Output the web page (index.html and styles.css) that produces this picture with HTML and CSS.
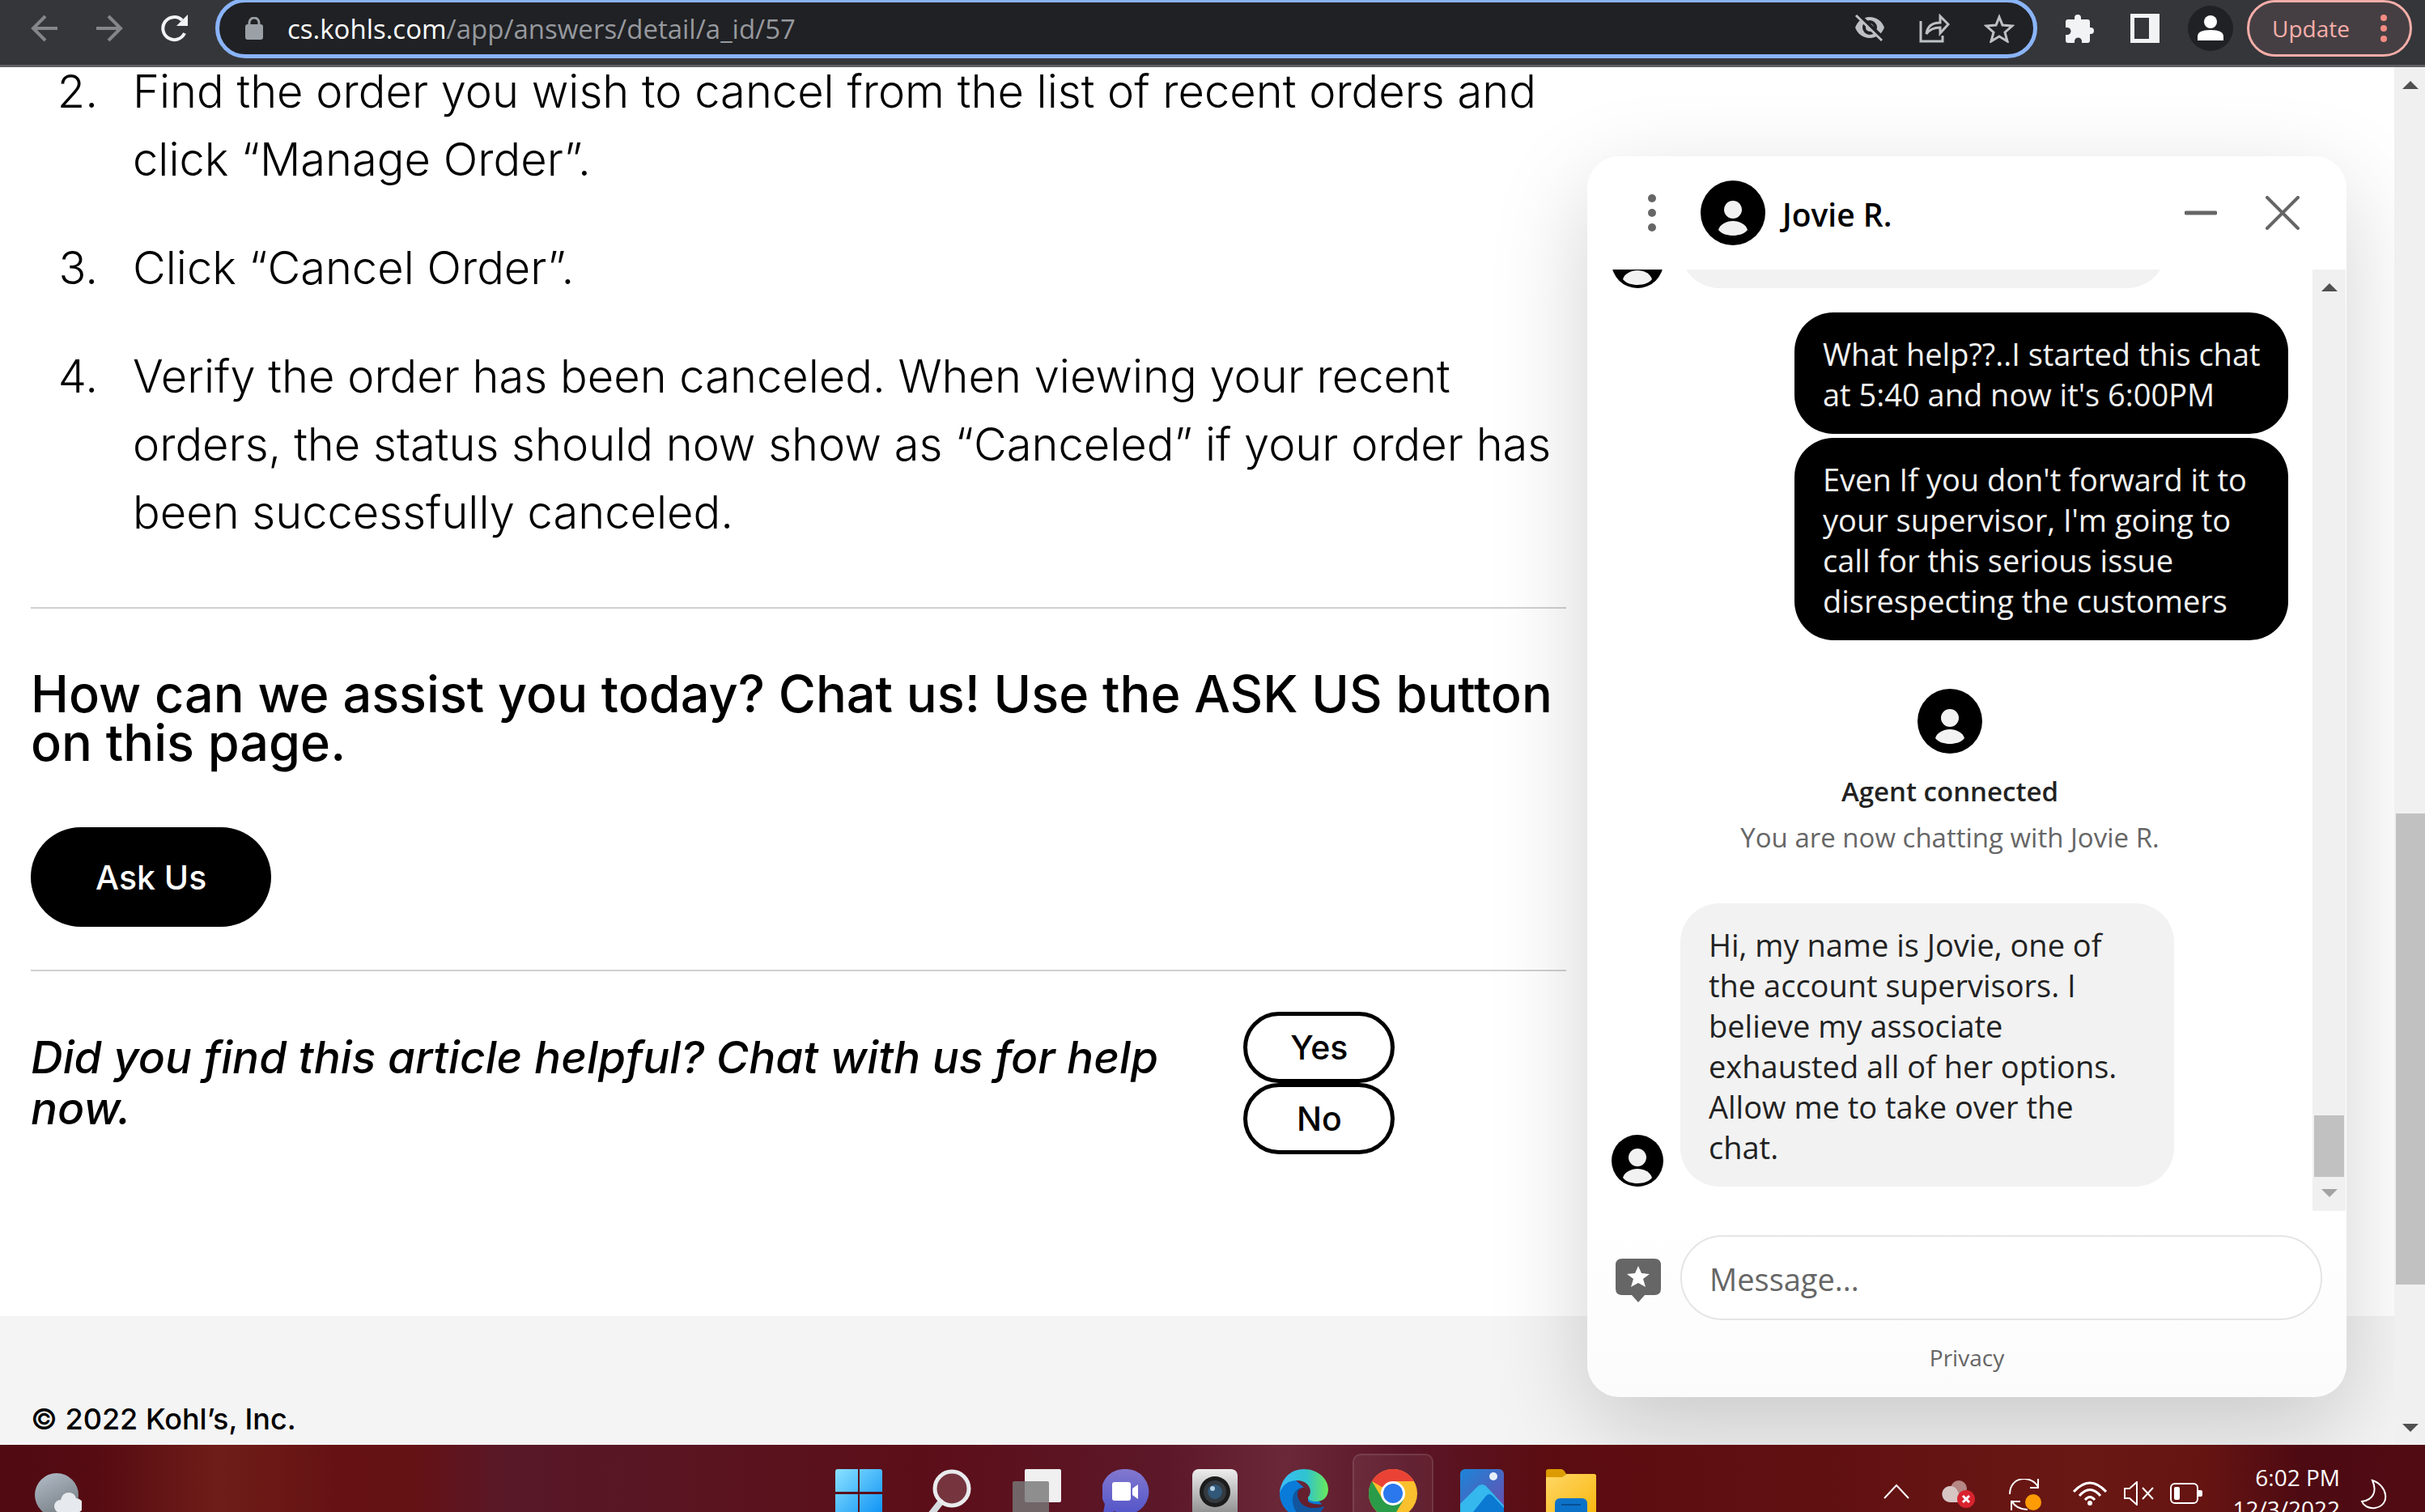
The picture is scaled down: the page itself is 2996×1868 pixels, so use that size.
FILE: index.html
```html
<!DOCTYPE html>
<html lang="en">

<head>
    <meta charset="UTF-8">
    <meta name="viewport" content="width=device-width, initial-scale=1.0">
    <title>Cancel an Order</title>
    <link rel="stylesheet" href="styles.css">
</head>

<body>
    <!-- shared person glyph -->
    <svg class="sprite" aria-hidden="true">
        <symbol id="person" viewBox="0 0 80 80">
            <circle cx="40" cy="36" r="11" />
            <path d="M22 61C24 54 32 50 40 50s16 4 18 11C54 66 47 68 40 68S26 66 22 61Z" />
        </symbol>
    </svg>

    <header class="toolbar">
        <nav class="nav-buttons">
            <button class="icon-button" aria-label="Back">
                <svg width="34" height="34" viewBox="0 0 34 34" fill="none" stroke="#84868a" stroke-width="4"><path d="M33 17H3M18 2 3 17l15 15" /></svg>
            </button>
            <button class="icon-button" aria-label="Forward">
                <svg width="34" height="34" viewBox="0 0 34 34" fill="none" stroke="#84868a" stroke-width="4"><path d="M1 17h30M16 2l15 15-15 15" /></svg>
            </button>
            <button class="icon-button" aria-label="Reload">
                <svg width="34" height="34" viewBox="0 0 34 34"><path d="M30 23A14 14 0 1 1 27 7" fill="none" stroke="#f1f3f4" stroke-width="4" /><path d="M34 0v14H20Z" fill="#f1f3f4" /></svg>
            </button>
        </nav>
        <div class="address-bar">
            <svg width="22" height="28" viewBox="0 0 22 28"><path d="M5 11V7a6 6 0 0 1 12 0v4" fill="none" stroke="#9aa0a6" stroke-width="3" /><rect y="9" width="22" height="19" rx="3" fill="#9aa0a6" /></svg>
            <a class="address" href="#"><span class="host">cs.kohls.com</span>/app/answers/detail/a_id/57</a>
            <button class="icon-button" aria-label="Third-party cookies blocked">
                <svg width="38" height="34" viewBox="0 0 38 34"><path d="M1 16C4 8 11 3 19 3s15 5 18 13c-3 8-10 13-18 13S4 24 1 16Z" fill="#bdc1c6" /><circle cx="19" cy="16" r="7" fill="none" stroke="#202124" stroke-width="4" /><path d="m5 0 32 31" stroke="#202124" stroke-width="5" /><path d="m2 1 32 31" stroke="#bdc1c6" stroke-width="3" /></svg>
            </button>
            <button class="icon-button" aria-label="Share">
                <svg width="38" height="36" viewBox="0 0 38 36" fill="none" stroke="#bdc1c6" stroke-width="3"><path d="M2 9v25h27v-7" /><path d="M9 25c1-9 7-14 17-14V3l10 10-10 11v-7c-8 0-13 2-17 8Z" /></svg>
            </button>
            <button class="icon-button" aria-label="Bookmark this page">
                <svg width="38" height="36" viewBox="0 0 38 36" fill="none" stroke="#bdc1c6" stroke-width="3"><path d="m19 4 4 10 12 1-9 8 3 11-10-6-10 6 3-11-9-8 12-1Z" /></svg>
            </button>
        </div>
        <div class="browser-actions">
            <button class="icon-button" aria-label="Extensions">
                <svg width="36" height="36" viewBox="0 0 36 36" fill="#f1f3f4"><path d="M3 7h8V5a4 4 0 0 1 8 0v2h8q3 0 3 3v7h1a4 4 0 0 1 0 8h-1v8q0 3-3 3h-7v-2a4 4 0 0 0-9 0v2H3q-3 0-3-3v-7h2a4 4 0 0 0 0-9H0v-7q0-3 3-3Z" /></svg>
            </button>
            <button class="icon-button" aria-label="Side panel">
                <svg width="36" height="36" viewBox="0 0 36 36"><path d="M0 0h36v36H0ZM5 5v26h18V5Z" fill="#f1f3f4" fill-rule="evenodd" /></svg>
            </button>
            <button class="icon-button profile" aria-label="Profile">
                <svg width="56" height="56" viewBox="0 0 56 56"><circle cx="28" cy="28" r="28" fill="#202124" /><g fill="#fff"><circle cx="28" cy="20" r="8" /><path d="M12 43v-5q0-8 16-8t16 8v5Z" /></g></svg>
            </button>
            <button class="update-button">Update
                <svg width="8" height="34" viewBox="0 0 8 34" fill="#f28b82"><circle cx="4" cy="4" r="4" /><circle cx="4" cy="17" r="4" /><circle cx="4" cy="30" r="4" /></svg>
            </button>
        </div>
    </header>

    <div class="window">
        <div class="page">
            <main class="article">
                <ol class="steps">
                    <li>Find the order you wish to cancel from the list of recent orders and click “Manage Order”.</li>
                    <li>Click “Cancel Order”.</li>
                    <li>Verify the order has been canceled. When viewing your recent orders, the status should now show as “Canceled” if your order has been successfully canceled.</li>
                </ol>
                <section class="assist">
                    <h2>How can we assist you today? Chat us! Use the ASK US button on this page.</h2>
                    <button class="ask-button">Ask Us</button>
                </section>
                <section class="feedback">
                    <p>Did you find this article helpful? Chat with us for help now.</p>
                    <div class="votes">
                        <button>Yes</button>
                        <button>No</button>
                    </div>
                </section>
            </main>
            <footer class="site-footer">© 2022 Kohl’s, Inc.</footer>

            <aside class="chat">
                <div class="chat-header">
                    <button class="icon-button" aria-label="Chat options">
                        <svg width="10" height="46" viewBox="0 0 10 46" fill="#666"><circle cx="5" cy="5" r="5" /><circle cx="5" cy="23" r="5" /><circle cx="5" cy="41" r="5" /></svg>
                    </button>
                    <svg class="avatar" viewBox="0 0 80 80"><use href="#person" /></svg>
                    <h3>Jovie R.</h3>
                    <button class="icon-button" aria-label="Minimize">
                        <svg width="40" height="40" viewBox="0 0 40 40" stroke="#666" stroke-width="5" stroke-linecap="round"><path d="M2 20h36" /></svg>
                    </button>
                    <button class="icon-button" aria-label="Close">
                        <svg width="42" height="42" viewBox="0 0 42 42" stroke="#666" stroke-width="4" stroke-linecap="round"><path d="m2 2 38 38M40 2 2 40" /></svg>
                    </button>
                </div>
                <div class="chat-body">
                    <div class="messages">
                        <div class="message previous">
                            <svg class="avatar small" viewBox="8 8 64 64"><use href="#person" width="80" height="80" /></svg>
                            <div class="bubble"></div>
                        </div>
                        <p class="bubble mine">What help??..I started this chat at 5:40 and now it's 6:00PM</p>
                        <p class="bubble mine">Even If you don't forward it to your supervisor, I'm going to call for this serious issue disrespecting the customers</p>
                        <div class="status">
                            <svg class="avatar" viewBox="0 0 80 80"><use href="#person" /></svg>
                            <h4>Agent connected</h4>
                            <p>You are now chatting with Jovie R.</p>
                        </div>
                        <div class="message">
                            <svg class="avatar small" viewBox="8 8 64 64"><use href="#person" width="80" height="80" /></svg>
                            <p class="bubble">Hi, my name is Jovie, one of the account supervisors. I believe my associate exhausted all of her options. Allow me to take over the chat.</p>
                        </div>
                    </div>
                    <div class="scrollbar chat-scrollbar">
                        <span class="arrow up"></span>
                        <span class="thumb"></span>
                        <span class="arrow down disabled"></span>
                    </div>
                </div>
                <form class="composer">
                    <button class="icon-button" type="button" aria-label="Rate this chat">
                        <svg width="56" height="54" viewBox="0 0 56 54"><path d="M8 0h40q8 0 8 8v29q0 8-8 8H36l-8 9-8-9H8q-8 0-8-8V8q0-8 8-8Z" fill="#666" /><path d="m28 9 4 9 10 1-8 6 3 10-9-5-9 5 3-10-8-6 10-1Z" fill="#fff" /></svg>
                    </button>
                    <input type="text" aria-label="Message" placeholder="Message...">
                </form>
                <a class="privacy" href="#">Privacy</a>
            </aside>
        </div>
        <div class="scrollbar">
            <span class="arrow up"></span>
            <span class="thumb"></span>
            <span class="arrow down"></span>
        </div>
    </div>

    <div class="taskbar">
        <button class="weather" aria-label="Weather">
            <svg width="58" height="60" viewBox="0 0 58 60">
                <defs><linearGradient id="moon" x2=".5" y2="1"><stop stop-color="#b4bfca" /><stop offset="1" stop-color="#798087" /></linearGradient></defs>
                <circle cx="27" cy="28" r="27" fill="url(#moon)" />
                <path d="M32 50a8 8 0 0 1 0-16q2-9 10-9 7 0 9 7a9 9 0 0 1 0 18Z" fill="#e6eaee" />
            </svg>
        </button>
        <nav class="apps">
            <button aria-label="Start">
                <svg width="58" height="62" viewBox="0 0 58 62">
                    <defs><linearGradient id="win" x2="1" y2="1"><stop stop-color="#8be2ff" /><stop offset="1" stop-color="#0a90f5" /></linearGradient></defs>
                    <path d="M3 0h25v28H0V3q0-3 3-3ZM30 0h25q3 0 3 3v25H30ZM0 31h28v28H3q-3 0-3-3ZM30 31h28v25q0 3-3 3H30Z" fill="url(#win)" />
                </svg>
            </button>
            <button aria-label="Search">
                <svg width="58" height="62" viewBox="0 0 58 62"><path d="M20 41 5 60" stroke="#d5dade" stroke-width="8" stroke-linecap="round" /><circle cx="34" cy="24" r="21" fill="#fff" fill-opacity=".16" stroke="#e9ebed" stroke-width="5" /></svg>
            </button>
            <button aria-label="Task view">
                <svg width="60" height="62" viewBox="0 0 60 62"><rect x="15" width="45" height="41" rx="2" fill="#f0f0f0" /><rect y="15" width="45" height="42" rx="2" fill="#777" fill-opacity=".82" /></svg>
            </button>
            <button aria-label="Chat">
                <svg width="58" height="62" viewBox="0 0 58 62">
                    <defs><linearGradient id="teams" x2="0" y2="1"><stop stop-color="#8278cf" /><stop offset="1" stop-color="#4f52c8" /></linearGradient></defs>
                    <path d="M28 0a28 28 0 1 1-13 52L0 60l3-17A28 28 0 0 1 28 0Z" fill="url(#teams)" />
                    <rect x="12" y="16" width="23" height="23" rx="3" fill="#fff" /><path d="m37 24 7-5v18l-7-5Z" fill="#fff" />
                </svg>
            </button>
            <button aria-label="Camera">
                <svg width="56" height="64" viewBox="0 0 56 64">
                    <defs><linearGradient id="cam" x2="0" y2="1"><stop stop-color="#eee" /><stop offset="1" stop-color="#888" /></linearGradient></defs>
                    <rect width="56" height="60" rx="8" fill="url(#cam)" /><circle cx="28" cy="28" r="19" fill="#1c1c1c" /><circle cx="28" cy="28" r="14" fill="#343a40" /><circle cx="28" cy="28" r="9" fill="#315878" /><circle cx="25" cy="24" r="3" fill="#b4d2e3" />
                </svg>
            </button>
            <button aria-label="Edge">
                <svg width="60" height="64" viewBox="0 0 60 64">
                    <defs><linearGradient id="edge" x2="1"><stop stop-color="#3dbdfb" /><stop offset=".55" stop-color="#2fc3cf" /><stop offset="1" stop-color="#6bea58" /></linearGradient></defs>
                    <path d="M0 28C2 18 10 12 20 14l18 16 17 16-9 14H30A30 30 0 0 1 0 28Z" fill="#0a7bd8" />
                    <path d="M26 23C15 26 10 44 27 61h10c9-2 15-8 18-15C44 49 24 49 23 32c0-4 1-7 3-9Z" fill="#11569f" />
                    <path d="M22 31c0-5 4-9 9-8 6 2 8 9 4 13v4c6 4 15 4 20 3v3C44 50 24 50 22 31Z" fill="#651f2d" />
                    <path d="M0 29C2 11 14 0 30 0s30 11 30 25c0 9-6 15-15 15-6 0-11-2-10-5 1-2 3-3 3-7 0-8-7-14-17-14C11 14 4 19 0 29Z" fill="url(#edge)" />
                </svg>
            </button>
            <button class="active" aria-label="Chrome">
                <svg width="60" height="64" viewBox="0 0 60 64">
                    <circle cx="30" cy="30" r="30" fill="#fbc02d" />
                    <path d="M30 30 4 15a30 30 0 0 1 52 0H30Z" fill="#ea4335" />
                    <path d="M4 15a30 30 0 0 0 26 45l13-22L30 30 17 37Z" fill="#2a9b48" />
                    <circle cx="30" cy="30" r="15" fill="#fff" /><circle cx="30" cy="30" r="12" fill="#2b78ee" />
                </svg>
            </button>
            <button aria-label="Photos">
                <svg width="54" height="60" viewBox="0 0 54 60">
                    <defs><linearGradient id="photo" x2="1" y2="1"><stop stop-color="#1a86d9" /><stop offset="1" stop-color="#704aac" /></linearGradient></defs>
                    <rect width="54" height="58" rx="6" fill="url(#photo)" /><circle cx="41" cy="9" r="5" fill="#e6f1fb" />
                    <path d="m0 43 22-22q5-4 10 0l22 24v13H0Z" fill="#34b8ee" /><path d="m12 58 20-25q4-4 8 0l14 15v10Z" fill="#0b78d1" />
                </svg>
            </button>
            <button aria-label="File Explorer">
                <svg width="62" height="60" viewBox="0 0 62 60">
                    <defs><linearGradient id="folder" x2="1" y2="1"><stop stop-color="#ffd767" /><stop offset="1" stop-color="#f8b60a" /></linearGradient></defs>
                    <path d="M3 0h16q3 0 6 6h34q3 0 3 3v20H0V3q0-3 3-3Z" fill="#dc9b03" />
                    <path d="M0 10h20l6-4h33q3 0 3 3v51H0Z" fill="url(#folder)" />
                    <path d="M11 60V43q0-7 7-7h26q7 0 7 7v17Z" fill="#0c72c9" /><path d="M19 44h24" stroke="#084f93" stroke-width="2" />
                </svg>
            </button>
        </nav>
        <div class="tray">
            <button aria-label="Show hidden icons"><svg width="32" height="34" viewBox="0 0 32 34" fill="none" stroke="#fff" stroke-width="2"><path d="m1 24 15-16 15 16" /></svg></button>
            <button aria-label="OneDrive"><svg width="42" height="36" viewBox="0 0 42 36"><circle cx="21" cy="12" r="10" fill="#b58785" /><path d="M10 29A10 10 0 1 1 19 14l7 15Z" fill="#d7c5c4" /><circle cx="30" cy="25" r="11" fill="#d9232e" /><path d="m26 21 8 8M34 21l-8 8" stroke="#fff" stroke-width="3" /></svg></button>
            <button aria-label="Windows Update"><svg width="42" height="42" viewBox="0 0 42 42" fill="none" stroke="#fff" stroke-width="2"><path d="M2 19C2-4 29-5 37 10M37 0v11H27M24 38C14 38 8 34 4 27M4 39V28h11" /><circle cx="31" cy="29" r="10" fill="#ff9b05" stroke="none" /></svg></button>
            <button class="network" aria-label="Network, sound and battery">
                <svg width="42" height="30" viewBox="0 0 42 30" fill="none" stroke="#fff" stroke-width="3"><path d="M1 13q20-22 40 0M8 18q13-15 26 0M15 23q6-7 12 0" /><circle cx="21" cy="27" r="3" fill="#fff" stroke="none" /></svg>
                <svg width="38" height="30" viewBox="0 0 38 30" fill="none" stroke="#fff" stroke-width="2"><path d="M2 9h6l9-8v28l-9-8H2ZM24 8l13 14M37 8 24 22" /></svg>
                <svg width="40" height="28" viewBox="0 0 40 28"><rect x="1" y="2" width="33" height="24" rx="5" fill="none" stroke="#fff" stroke-width="2" /><rect x="5" y="6" width="7" height="16" rx="2" fill="#fff" /><path d="M35 10h3q2 0 2 2v4q0 2-2 2h-3Z" fill="#fff" /></svg>
            </button>
            <button class="clock"><span>6:02 PM</span><span>12/3/2022</span></button>
            <button aria-label="Focus assist"><svg width="34" height="38" viewBox="0 0 34 38" fill="none" stroke="#fff" stroke-width="2"><path d="M15 2c19 6 23 31 3 34-8 1-14-3-16-8 14-2 19-12 13-26Z" /></svg></button>
        </div>
    </div>
</body>

</html>
```
FILE: styles.css
```css
* {
    box-sizing: border-box;
}

body {
    margin: 0;
    height: 100vh;
    display: flex;
    flex-direction: column;
    overflow: hidden;
    background-color: #fff;
    color: #000;
    font-family: Inter, sans-serif;
}

h2, h3, h4, p, ol {
    margin: 0;
    padding: 0;
}

button {
    border: none;
    padding: 0;
    background: none;
    color: inherit;
    font-family: inherit;
    cursor: pointer;
}

svg {
    display: block;
    flex-shrink: 0;
}

.sprite {
    position: absolute;
    width: 0;
    height: 0;
}

/* browser toolbar */
.toolbar {
    flex: none;
    display: flex;
    height: 83px;
    padding: 0 16px 0 38px;
    background-color: #35363a;
    border-bottom: 3px solid #5f5f64;
    font-family: "Open Sans", sans-serif;
}

.nav-buttons {
    display: flex;
    align-items: center;
    gap: 46px;
    height: 70px;
    margin-right: 34px;
}

.address-bar {
    flex: 1;
    display: flex;
    align-items: center;
    gap: 42px;
    height: 74px;
    margin-top: -2px;
    padding: 0 23px 0 32px;
    border: 5px solid #8ab4f8;
    border-radius: 37px;
    background-color: #202124;
}

.address {
    flex: 1;
    margin-left: -12px;
    color: #96999e;
    font-size: 33px;
    text-decoration: none;
}

.host {
    color: #fff;
}

.browser-actions {
    display: flex;
    align-items: center;
    gap: 44px;
    height: 70px;
    margin-left: 35px;
}

.profile {
    margin: 0 -27px 0 -9px;
}

.update-button {
    display: flex;
    align-items: center;
    justify-content: space-between;
    width: 204px;
    height: 70px;
    padding: 0 28px;
    border: 3px solid #f6aea9;
    border-radius: 35px;
    background-color: #453f43;
    color: #f6aea9;
    font-size: 28px;
}

/* page */
.window {
    flex: 1;
    display: flex;
    min-height: 0;
}

.page {
    flex: 1;
    position: relative;
    display: flex;
    flex-direction: column;
    overflow: hidden;
}

.article {
    flex: 1;
    width: 66%;
    padding: 0 17px 0 38px;
}

.steps {
    display: grid;
    gap: 50px;
    margin-top: -12px;
    padding-bottom: 75px;
    list-style: none;
    counter-reset: step 1;
    font-size: 56px;
    font-weight: 300;
    line-height: 84px;
}

.steps li {
    display: grid;
    grid-template-columns: 83px 1fr;
    gap: 43px;
}

.steps li::before {
    counter-increment: step;
    content: counter(step) ".";
    text-align: right;
}

.assist {
    padding: 75px 0 53px;
    border-top: 2px solid #d0d0d0;
    border-bottom: 2px solid #d0d0d0;
}

.assist h2 {
    margin-bottom: 75px;
    font-size: 63px;
    font-weight: 500;
    line-height: 60px;
}

.ask-button {
    display: block;
    height: 123px;
    padding: 0 80px;
    border-radius: 62px;
    background-color: #000;
    color: #fff;
    font-size: 41px;
    font-weight: 500;
}

.feedback {
    display: grid;
    grid-template-columns: 1fr 399px;
    gap: 60px;
    padding-top: 50px;
}

.feedback p {
    padding-top: 25px;
    font-size: 55px;
    font-style: italic;
    font-weight: 500;
    line-height: 63px;
}

.votes button {
    display: block;
    width: 187px;
    height: 88px;
    border: 5px solid #000;
    border-radius: 44px;
    background-color: #fff;
    font-size: 41px;
    font-weight: 500;
}

.site-footer {
    height: 159px;
    padding: 106px 38px 0;
    background-color: #f4f4f4;
    font-size: 36px;
    font-weight: 500;
    line-height: 42px;
}

/* scrollbars */
.scrollbar {
    flex: none;
    display: flex;
    flex-direction: column;
    align-items: center;
    width: 38px;
    padding: 17px 0 16px 2px;
    background-color: #f0f0f0;
}

.arrow {
    border: 10px solid transparent;
}

.arrow.up {
    margin-bottom: auto;
    border-top: none;
    border-bottom-color: #505050;
}

.arrow.down {
    border-bottom: none;
    border-top-color: #505050;
}

.arrow.disabled {
    border-top-color: #a3a3a3;
}

.thumb {
    width: 100%;
    height: 582px;
    margin-bottom: 172px;
    background-color: #c1c1c1;
}

/* chat window */
.chat {
    position: absolute;
    top: 110px;
    right: 59px;
    bottom: 59px;
    display: flex;
    flex-direction: column;
    width: 938px;
    border-radius: 40px;
    background: linear-gradient(#fff 85%, #fbfbfb);
    box-shadow: 0 40px 120px rgba(0, 0, 0, 0.18);
    font-family: "Open Sans", sans-serif;
}

.chat-header {
    display: flex;
    align-items: center;
    height: 140px;
    padding: 0 58px 0 75px;
}

.chat-header h3 {
    flex: 1;
    margin-left: 21px;
    padding-top: 2px;
    font-size: 39px;
    font-weight: 600;
}

.chat-header .avatar {
    margin-left: 55px;
}

.chat-header .icon-button + .icon-button {
    margin-left: 60px;
}

.avatar {
    width: 80px;
    height: 80px;
    border-radius: 50%;
    background-color: #000;
    fill: #f2f2f2;
}

.avatar.small {
    width: 64px;
    height: 64px;
}

.chat-body {
    flex: 1;
    display: flex;
    min-height: 0;
}

.messages {
    flex: 1;
    display: flex;
    flex-direction: column;
    justify-content: flex-end;
    overflow: hidden;
    padding: 0 30px;
    padding-bottom: 30px;
}

.message {
    display: flex;
    align-items: flex-end;
    gap: 21px;
}

.bubble {
    width: 610px;
    padding: 26px 36px 24px 35px;
    border-radius: 48px;
    background-color: #f2f2f2;
    color: #222;
    font-size: 38px;
    line-height: 50px;
}

.previous {
    margin-bottom: 30px;
}

.previous .bubble {
    width: 600px;
    height: 150px;
}

.mine {
    align-self: flex-end;
    margin-bottom: 5px;
    padding-right: 28px;
    background-color: #000;
    color: #f2f2f2;
}

.status {
    display: flex;
    flex-direction: column;
    align-items: center;
    padding: 55px 0 53px;
    font-size: 33px;
    line-height: 57px;
    color: #666;
}

.status h4 {
    margin-top: 18px;
    color: #222;
    font-weight: 600;
}

.chat-scrollbar {
    width: 41px;
    margin-right: 1px;
    padding: 17px 2px;
}

.chat-scrollbar .thumb {
    height: 76px;
    margin-bottom: 15px;
}

.composer {
    display: flex;
    align-items: center;
    gap: 24px;
    margin: 30px 30px 0 35px;
}

.composer .icon-button {
    padding-top: 6px;
}

.composer input {
    flex: 1;
    height: 105px;
    padding: 2px 34px 0;
    border: 2px solid #e5e5e5;
    border-radius: 52px;
    background-color: #fff;
    font-family: inherit;
    font-size: 38px;
}

.composer input::placeholder {
    color: #666;
}

.privacy {
    align-self: center;
    margin: 26px 0 28px;
    color: #666;
    font-size: 28px;
    line-height: 41px;
    text-decoration: none;
}

/* windows taskbar */
.taskbar {
    flex: none;
    display: grid;
    grid-template-columns: 1fr auto 1fr;
    height: 83px;
    overflow: hidden;
    background: linear-gradient(90deg, #500a12 0%, #560b12 4%, #6f1d18 9%, #661214 14%, #651215 17%, #581828 21%, #5a121c 33%, #5c0e18 38%, #5c1829 48%, #6b2838 53%, #5a1628 58%, #5b0c10 64%, #611012 75%, #6a1814 86%, #651412 91%, #4d0a12 95%, #510b13 100%);
    color: #fff;
    font-family: "Open Sans", sans-serif;
}

.weather {
    justify-self: start;
    align-self: start;
    margin: 34px 0 0 43px;
}

.apps {
    display: flex;
    gap: 10px;
    padding: 11px 0 0 5px;
}

.apps button {
    display: flex;
    justify-content: center;
    width: 100px;
    height: 90px;
    padding-top: 17px;
    border: 2px solid transparent;
    border-radius: 10px;
}

.apps .active {
    border-color: rgba(255, 255, 255, 0.1);
    background-color: rgba(255, 255, 255, 0.06);
}

.tray {
    justify-self: end;
    display: flex;
    align-items: flex-start;
    gap: 40px;
    padding: 42px 46px 0 0;
}

.network {
    display: flex;
    align-items: center;
    gap: 20px;
    margin-left: -2px;
    padding-top: 3px;
}

.clock {
    display: grid;
    margin: -21px -15px 0 -3px;
    font-size: 28px;
    line-height: 39px;
    text-align: right;
}
```
